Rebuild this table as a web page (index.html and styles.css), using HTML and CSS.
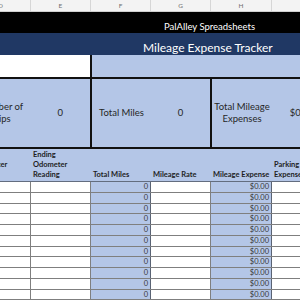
FILE: index.html
```html
<!DOCTYPE html>
<html>
<head>
<meta charset="utf-8">
<link rel="stylesheet" href="styles.css">
</head>
<body>
<div class="sheet">
  <div class="cols colhead">
    <span>D</span><span>E</span><span>F</span><span>G</span><span>H</span><span>I</span>
  </div>
  <div class="brand"><span>PalAlley Spreadsheets</span></div>
  <div class="title"><span>Mileage Expense Tracker</span></div>
  <div class="band"><div class="blank"></div><div class="fill"></div></div>
  <div class="summary">
    <div class="box"><div class="lbl">Number of<br>Trips</div><div class="val">0</div></div>
    <div class="box"><div class="lbl">Total Miles</div><div class="val">0</div></div>
    <div class="box last"><div class="lbl">Total Mileage<br>Expenses</div><div class="val">$0.00</div></div>
  </div>
  <div class="cols thead">
    <div class="th">Starting<br>Odometer<br>Reading</div>
    <div class="th">Ending<br>Odometer<br>Reading</div>
    <div class="th">Total Miles</div>
    <div class="th">Mileage Rate</div>
    <div class="th">Mileage Expense</div>
    <div class="th">Parking<br>Expense</div>
  </div>
  <div class="rows">
    <div class="cols row"><div class="td"></div><div class="td"></div><div class="td blue">0</div><div class="td"></div><div class="td blue">$0.00</div><div class="td"></div></div>
    <div class="cols row"><div class="td"></div><div class="td"></div><div class="td blue">0</div><div class="td"></div><div class="td blue">$0.00</div><div class="td"></div></div>
    <div class="cols row"><div class="td"></div><div class="td"></div><div class="td blue">0</div><div class="td"></div><div class="td blue">$0.00</div><div class="td"></div></div>
    <div class="cols row"><div class="td"></div><div class="td"></div><div class="td blue">0</div><div class="td"></div><div class="td blue">$0.00</div><div class="td"></div></div>
    <div class="cols row"><div class="td"></div><div class="td"></div><div class="td blue">0</div><div class="td"></div><div class="td blue">$0.00</div><div class="td"></div></div>
    <div class="cols row"><div class="td"></div><div class="td"></div><div class="td blue">0</div><div class="td"></div><div class="td blue">$0.00</div><div class="td"></div></div>
    <div class="cols row"><div class="td"></div><div class="td"></div><div class="td blue">0</div><div class="td"></div><div class="td blue">$0.00</div><div class="td"></div></div>
    <div class="cols row"><div class="td"></div><div class="td"></div><div class="td blue">0</div><div class="td"></div><div class="td blue">$0.00</div><div class="td"></div></div>
    <div class="cols row"><div class="td"></div><div class="td"></div><div class="td blue">0</div><div class="td"></div><div class="td blue">$0.00</div><div class="td"></div></div>
    <div class="cols row"><div class="td"></div><div class="td"></div><div class="td blue">0</div><div class="td"></div><div class="td blue">$0.00</div><div class="td"></div></div>
    <div class="cols row"><div class="td"></div><div class="td"></div><div class="td blue">0</div><div class="td"></div><div class="td blue">$0.00</div><div class="td"></div></div>
    <div class="cols row"><div class="td"></div><div class="td"></div><div class="td blue">0</div><div class="td"></div><div class="td blue">$0.00</div><div class="td"></div></div>
  </div>
</div>
</body>
</html>
```

FILE: styles.css
```css
html, body {
  margin: 0;
  padding: 0;
  width: 300px;
  height: 300px;
  overflow: hidden;
  background: #ffffff;
}
body {
  font-family: Lato, "Liberation Sans", sans-serif;
  color: #222;
}
* { box-sizing: border-box; }

.sheet {
  margin-left: -29px;
  width: 361px;
  display: flex;
  flex-direction: column;
}
.cols {
  display: grid;
  grid-template-columns: 60px 60px 60px 60px 61px 60px;
}

.colhead {
  height: 12px;
  background: #f3f3f3;
  border-bottom: 1px solid #cfcfcf;
}
.colhead span {
  border-right: 1px solid #d6d6d6;
  font-size: 6.5px;
  color: #707070;
  display: flex;
  align-items: center;
  justify-content: center;
}

.brand {
  height: 21px;
  background: #000;
  color: #fff;
  display: flex;
  align-items: flex-end;
  padding-left: 193px;
  font-size: 9.5px;
  line-height: 12px;
}

.title {
  height: 22px;
  background: #203864;
  color: #fff;
  display: flex;
  align-items: flex-end;
  padding-left: 172px;
  font-size: 12px;
  line-height: 14.5px;
}

.band {
  height: 22px;
  display: grid;
  grid-template-columns: 121px 1fr;
  background: #b4c6e7;
}
.band .blank {
  background: #fff;
  border-right: 2px solid #111;
}

.summary {
  height: 72px;
  display: grid;
  grid-template-columns: 121px 120px 120px;
  background: #b4c6e7;
  border-top: 2px solid #111;
  border-bottom: 2px solid #111;
}
.box {
  display: grid;
  grid-template-columns: 1fr 1fr;
  border-right: 2px solid #111;
  align-items: center;
  text-align: center;
  font-size: 9.5px;
  line-height: 12.5px;
  color: #262626;
}
.box.last { border-right: none; }

.thead {
  height: 33px;
  background: #b4c6e7;
  border-bottom: 1px solid rgba(0,0,0,0.45);
}
.th {
  display: flex;
  align-items: flex-end;
  padding: 0 0 1px 2px;
  font-size: 7.5px;
  font-weight: bold;
  line-height: 10px;
  white-space: nowrap;
  color: #1e1e1e;
}

.row {
  height: 10.75px;
  border-bottom: 1px solid rgba(0,0,0,0.5);
}
.td {
  border-right: 1px solid rgba(0,0,0,0.5);
  font-size: 7.5px;
  line-height: 9.5px;
  text-align: right;
  padding-right: 2px;
  color: #3a3a3a;
}
.td.blue { background: #b4c6e7; }
```
